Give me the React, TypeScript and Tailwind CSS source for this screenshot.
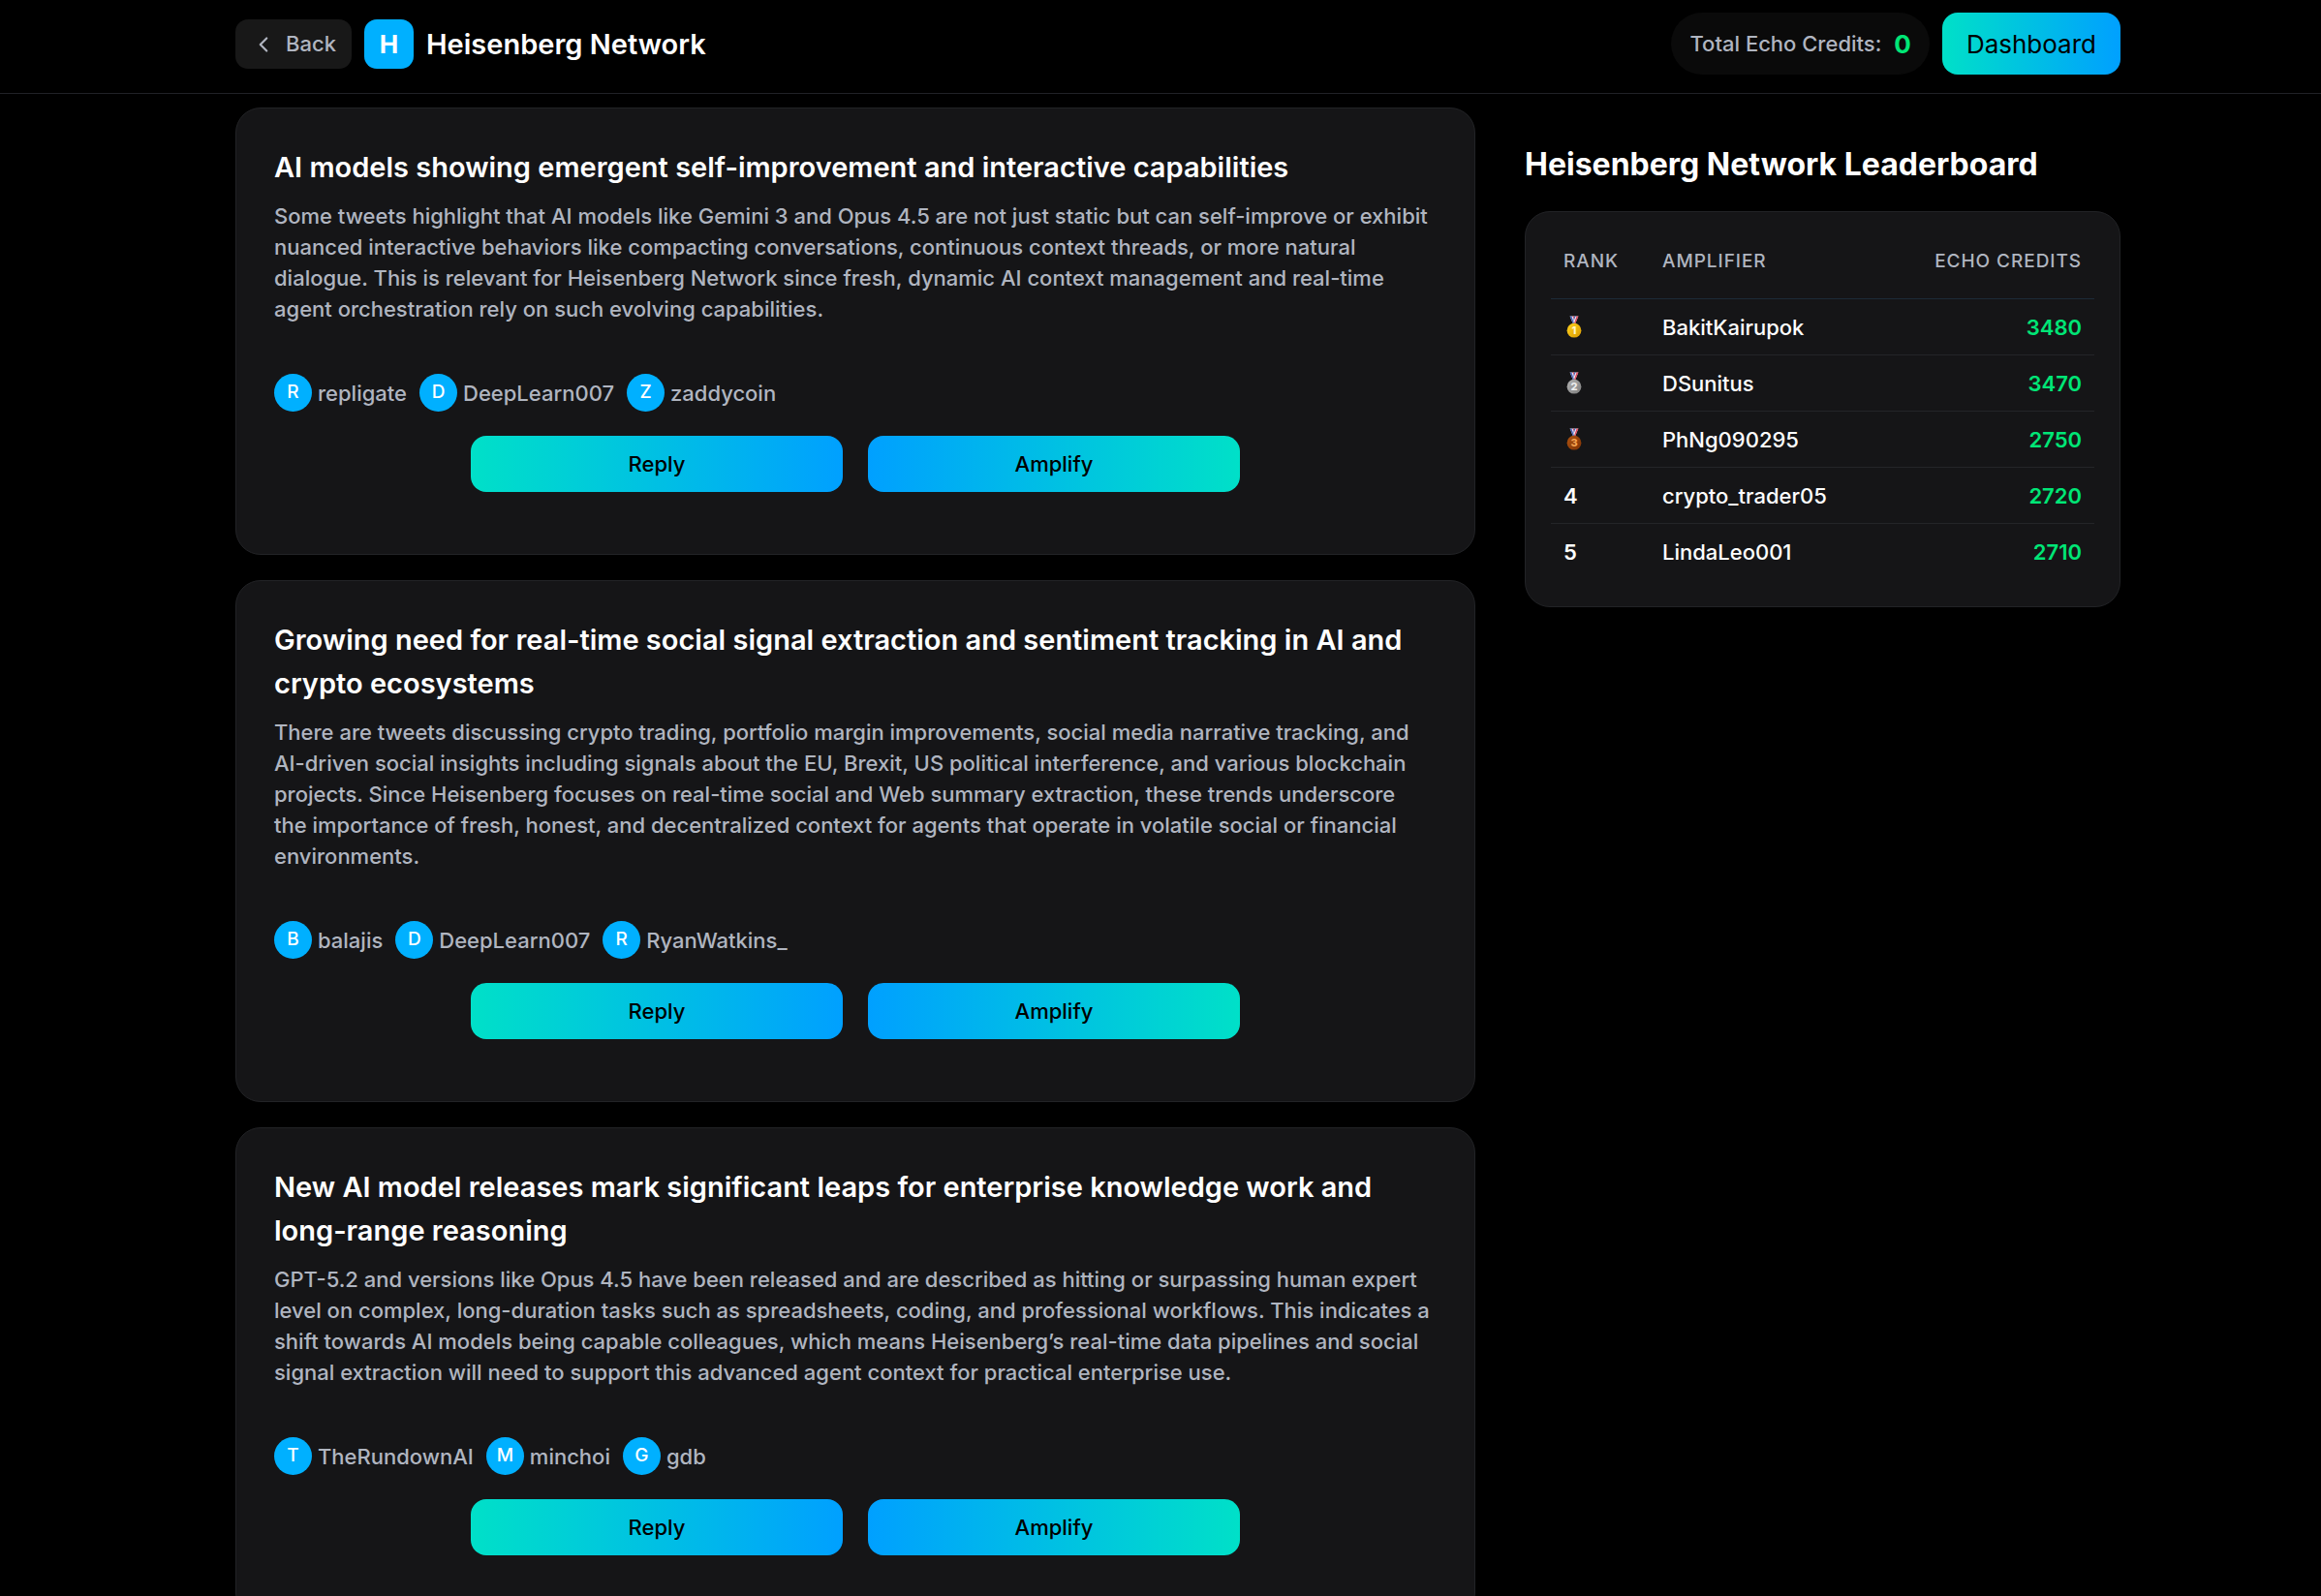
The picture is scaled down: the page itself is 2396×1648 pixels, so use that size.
import { ChevronLeft } from 'lucide-react';

const topics = [
  {
    title: 'AI models showing emergent self-improvement and interactive capabilities',
    description:
      'Some tweets highlight that AI models like Gemini 3 and Opus 4.5 are not just static but can self-improve or exhibit nuanced interactive behaviors like compacting conversations, continuous context threads, or more natural dialogue. This is relevant for Heisenberg Network since fresh, dynamic AI context management and real-time agent orchestration rely on such evolving capabilities.',
    authors: ['repligate', 'DeepLearn007', 'zaddycoin'],
  },
  {
    title: 'Growing need for real-time social signal extraction and sentiment tracking in AI and crypto ecosystems',
    description:
      'There are tweets discussing crypto trading, portfolio margin improvements, social media narrative tracking, and AI-driven social insights including signals about the EU, Brexit, US political interference, and various blockchain projects. Since Heisenberg focuses on real-time social and Web summary extraction, these trends underscore the importance of fresh, honest, and decentralized context for agents that operate in volatile social or financial environments.',
    authors: ['balajis', 'DeepLearn007', 'RyanWatkins_'],
  },
  {
    title: 'New AI model releases mark significant leaps for enterprise knowledge work and long-range reasoning',
    description:
      'GPT-5.2 and versions like Opus 4.5 have been released and are described as hitting or surpassing human expert level on complex, long-duration tasks such as spreadsheets, coding, and professional workflows. This indicates a shift towards AI models being capable colleagues, which means Heisenberg’s real-time data pipelines and social signal extraction will need to support this advanced agent context for practical enterprise use.',
    authors: ['TheRundownAI', 'minchoi', 'gdb'],
  },
];

const leaders = [
  { name: 'BakitKairupok', credits: 3480 },
  { name: 'DSunitus', credits: 3470 },
  { name: 'PhNg090295', credits: 2750 },
  { name: 'crypto_trader05', credits: 2720 },
  { name: 'LindaLeo001', credits: 2710 },
];

const medals = [
  { light: '#ffd21e', dark: '#d99a00', digit: '#fff6c8' },
  { light: '#b4b4b4', dark: '#7c7c7c', digit: '#ececec' },
  { light: '#b0530f', dark: '#7d3206', digit: '#f5a350' },
];

const Medal = ({ rank }: { rank: number }) => {
  const { light, dark, digit } = medals[rank - 1];

  return (
    <svg width="22" height="24" viewBox="0 0 22 24" role="img" aria-label={`Rank ${rank}`}>
      <defs>
        <linearGradient id={`medal-${rank}`} x1="0" y1="0" x2="1" y2="1">
          <stop offset="0" stopColor={light} />
          <stop offset="1" stopColor={dark} />
        </linearGradient>
      </defs>
      {/* Ribbon */}
      <path d="M6.6 0.5h8.8l-3.4 8h-2z" fill="#eceef6" />
      <path d="M6.6 0.5h1.8l2.8 8h-1.2z" fill="#4a62b8" />
      <path d="M9.4 0.5h1.5l.6 4z" fill="#e0455a" />
      <path d="M12.6 0.5h-1.5l-1 5.5z" fill="#4a62b8" />
      <path d="M15.4 0.5h-1.8l-2.8 8h1.2z" fill="#e0455a" />
      {/* Disc */}
      <circle cx="11" cy="15.2" r="7.4" fill={`url(#medal-${rank})`} />
      <text x="11" y="19.2" textAnchor="middle" fontSize="11" fontWeight="800" fill={digit}>
        {rank}
      </text>
    </svg>
  );
};

const Header = () => (
  <header className="border-b border-[#202126] pl-9">
    <div className="mx-auto flex max-w-[1946px] items-start justify-between pt-[13px] pb-[19px]">
      <div className="flex items-center gap-[13px] pt-[7px]">
        <button className="flex h-[51px] w-[120px] items-center gap-[10px] rounded-[13px] bg-[#181818] px-4 text-[22px] font-medium text-[#b0b5c0]">
          <ChevronLeft size={26} strokeWidth={2} className="shrink-0" />
          Back
        </button>
        <div className="flex size-[51px] items-center justify-center rounded-[13px] bg-[#00b0ff] text-[26px] font-bold text-white">
          H
        </div>
        <h1 className="text-[29px] leading-[45px] font-semibold text-white">Heisenberg Network</h1>
      </div>
      <div className="flex items-center gap-[13px]">
        <div className="flex h-16 items-center gap-[13px] rounded-full bg-[#0a0a0a] px-[19px]">
          <span className="text-[22px] font-medium text-[#b0b5c0]">Total Echo Credits:</span>
          <span className="text-[26px] font-bold text-[#00e676]">0</span>
        </div>
        <button className="h-16 rounded-2xl bg-linear-to-r/srgb from-[#00e0c8] to-[#00a0ff] px-[25px] text-[26px] text-black">
          Dashboard
        </button>
      </div>
    </div>
  </header>
);

const TopicCard = ({ topic }: { topic: (typeof topics)[number] }) => (
  <article className="rounded-[26px] border border-[#222326] bg-[#151517] px-[39px] pt-[38px] pb-16">
    <h2 className="text-[29px] leading-[45px] font-semibold text-white">{topic.title}</h2>
    <p className="mt-3 pr-[5px] text-[22px] leading-8 font-medium text-[#b0b5c0]">{topic.description}</p>
    <div className="mt-[51px] flex items-center gap-[13px]">
      {topic.authors.map((author) => (
        <div key={author} className="flex items-center gap-[6px]">
          <span className="flex size-[39px] items-center justify-center rounded-full bg-[#00b0ff] text-[19px] font-medium text-white">
            {author[0].toUpperCase()}
          </span>
          <span className="text-[22px] leading-8 font-medium text-[#b0b5c0]">{author}</span>
        </div>
      ))}
    </div>
    <div className="mt-[25px] flex justify-center gap-[26px]">
      <button className="h-[58px] w-96 rounded-2xl bg-linear-to-r/srgb from-[#00e0c8] to-[#00a0ff] text-[22px] font-medium text-black">
        Reply
      </button>
      <button className="h-[58px] w-96 rounded-2xl bg-linear-to-r/srgb from-[#00a0ff] to-[#00e0c8] text-[22px] font-medium text-black">
        Amplify
      </button>
    </div>
  </article>
);

const Leaderboard = () => (
  <aside className="w-[615px] shrink-0 pt-9">
    <h2 className="text-[32px] leading-[45px] font-bold text-white">Heisenberg Network Leaderboard</h2>
    <div className="mt-[26px] rounded-[26px] border border-[#222326] bg-[#151517] px-[26px] pt-[26px] pb-7">
      <table className="w-full">
        <thead>
          <tr className="border-b border-[#1c2b38] text-[19px] leading-[26px] tracking-wider text-[#b0b5c0] uppercase">
            <th className="w-[102px] px-[13px] pt-3 pb-[25px] text-left font-medium">Rank</th>
            <th className="px-[13px] pt-3 pb-[25px] text-left font-medium">Amplifier</th>
            <th className="px-[13px] pt-3 pb-[25px] text-right font-medium">Echo Credits</th>
          </tr>
        </thead>
        <tbody className="text-[22px] leading-8 text-white">
          {leaders.map((leader, index) => (
            <tr key={leader.name} className="border-b border-[#242528] last:border-b-0">
              <td className="px-[13px] pt-[13px] pb-3 font-semibold">
                {index < 3 ? <Medal rank={index + 1} /> : index + 1}
              </td>
              <td className="px-[13px] pt-[13px] pb-3 font-medium">{leader.name}</td>
              <td className="px-[13px] pt-[13px] pb-3 text-right font-semibold text-[#00e676]">{leader.credits}</td>
            </tr>
          ))}
        </tbody>
      </table>
    </div>
  </aside>
);

const App = () => {
  return (
    <div className="min-h-screen bg-black font-[Inter,sans-serif]">
      <Header />
      <main className="pl-9">
        <div className="mx-auto flex max-w-[1946px] items-start gap-[51px] pt-[14px]">
          <div className="flex flex-1 flex-col gap-[26px]">
            {topics.map((topic) => (
              <TopicCard key={topic.title} topic={topic} />
            ))}
          </div>
          <Leaderboard />
        </div>
      </main>
    </div>
  );
};

export default App;
